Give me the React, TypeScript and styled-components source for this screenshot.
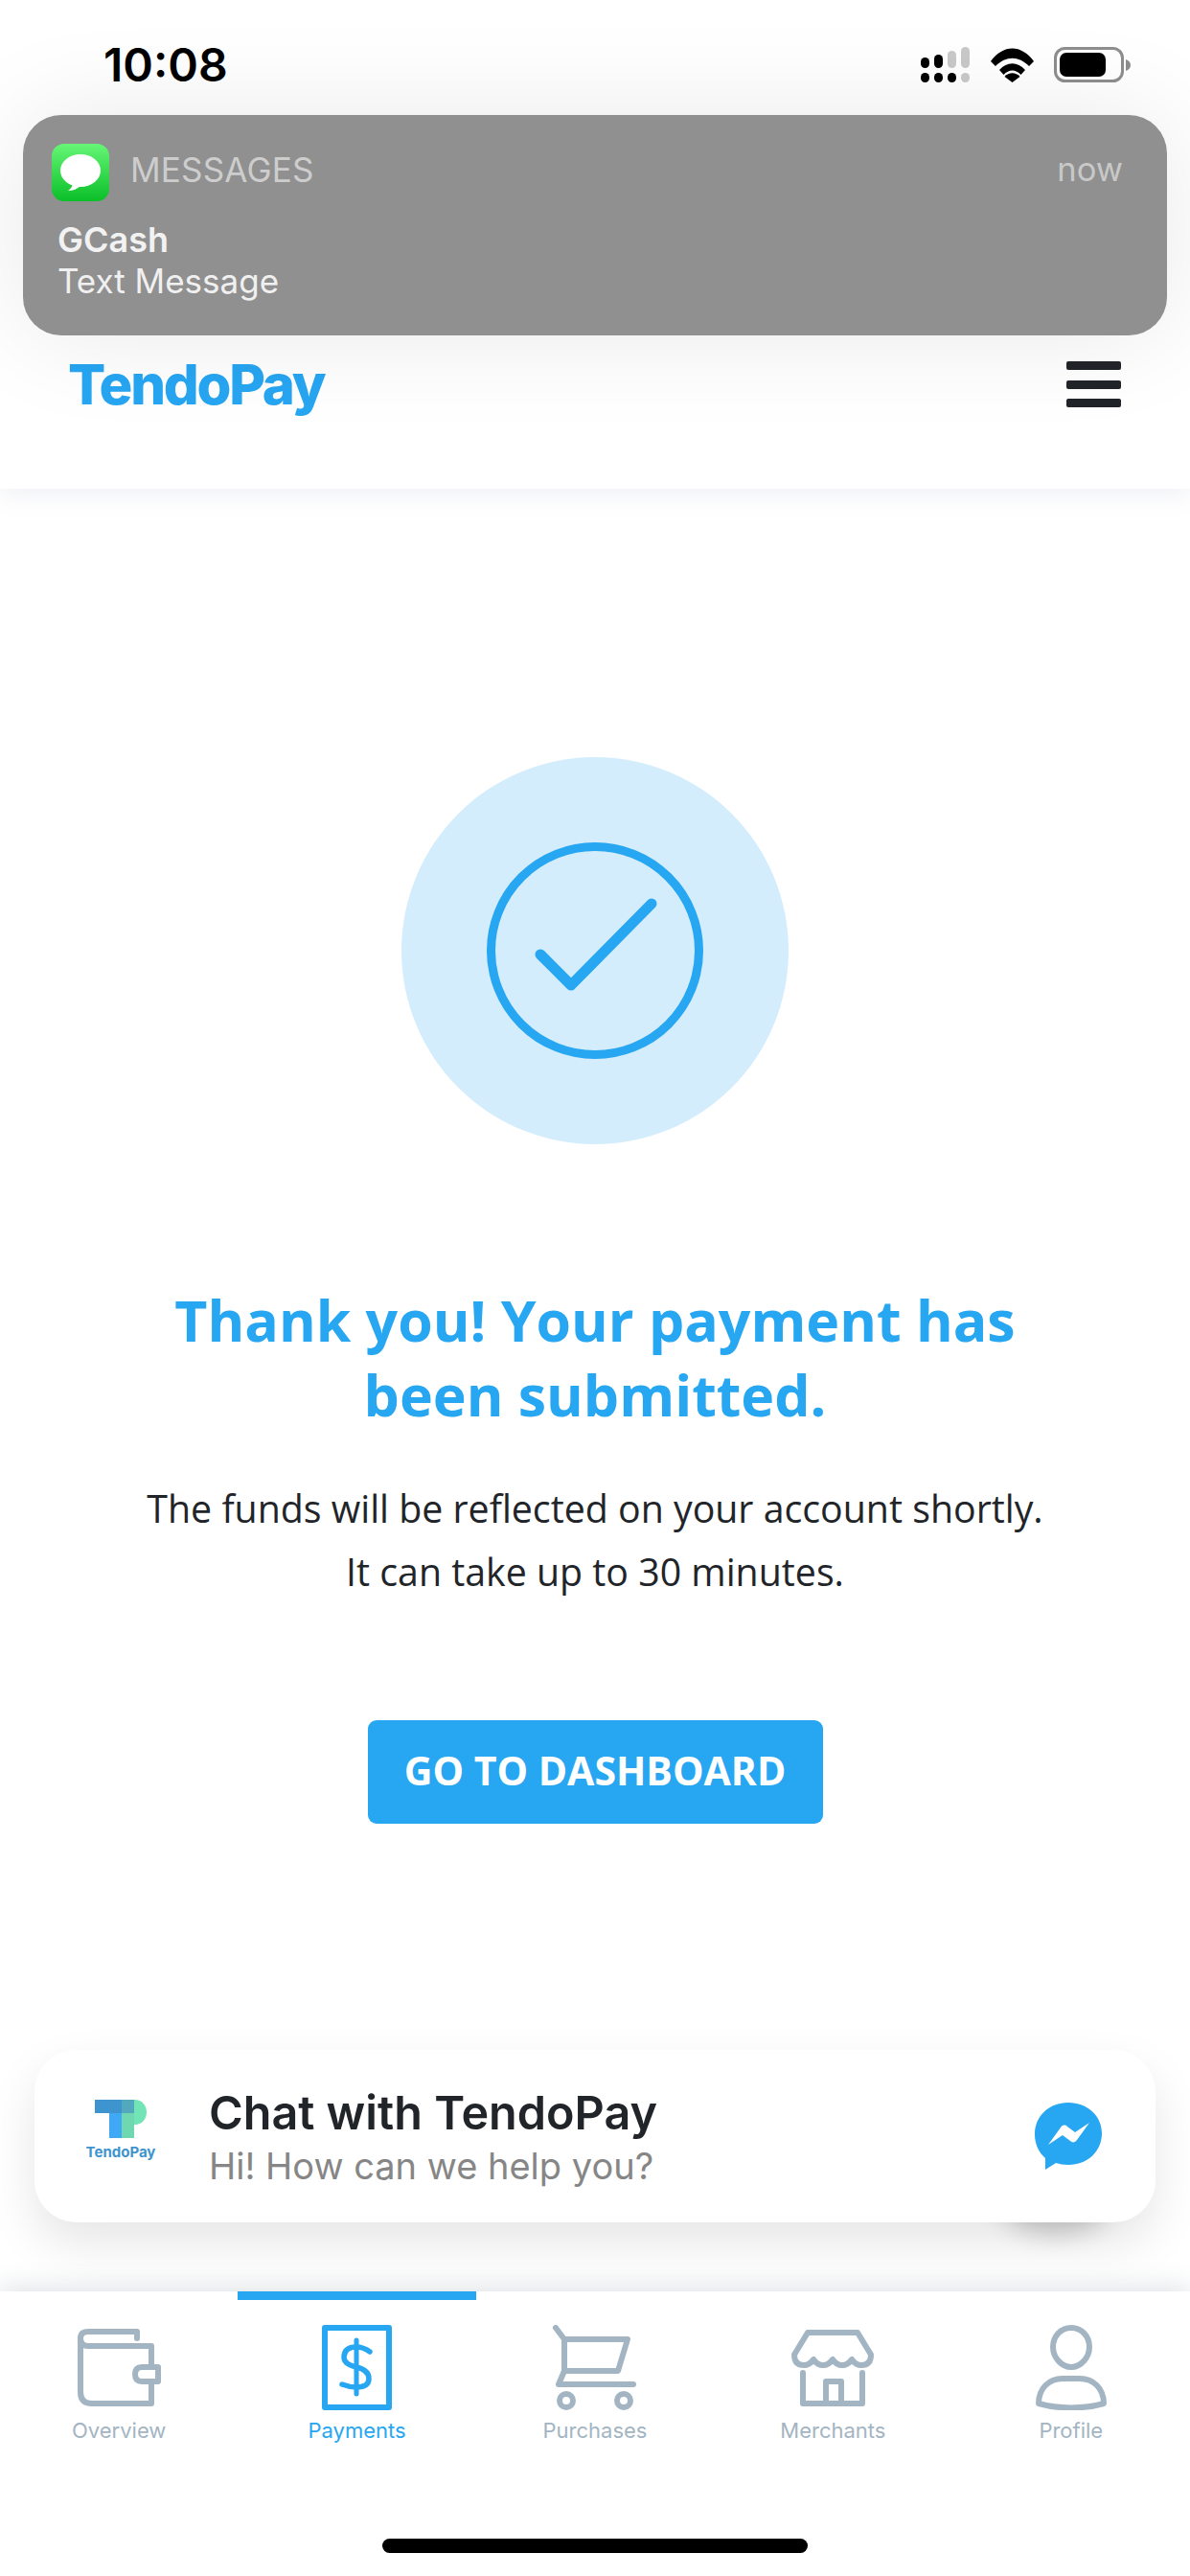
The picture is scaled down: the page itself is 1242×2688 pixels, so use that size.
import React from "react";
import styled, { createGlobalStyle } from "styled-components";

const Global = createGlobalStyle`
  html, body { margin: 0; padding: 0; background: #fff; }
  * { box-sizing: border-box; }
`;

const BLUE = "#27a6f2";
const GREY = "#a3b5c3";
const UI = `Inter, "Liberation Sans", sans-serif`;
const BRAND = `"Open Sans", Lato, sans-serif`;

const Page = styled.div`
  position: relative;
  width: 1242px;
  height: 2688px;
  display: flex;
  flex-direction: column;
  background: #fff;
  overflow: hidden;
  isolation: isolate;
  font-family: ${UI};
`;

const TopArea = styled.header`
  height: 510px;
  display: flex;
  flex-direction: column;
  background: #fff;
  box-shadow: 0 8px 22px rgba(120, 125, 170, 0.1);
`;

const StatusBar = styled.div`
  height: 120px;
  padding: 44px 62px 0 108px;
  display: flex;
  justify-content: space-between;
  align-items: flex-start;
`;

const Time = styled.span`
  font-size: 48px;
  line-height: 47px;
  font-weight: 600;
  color: #000;
`;

const StatusIcons = styled.div`
  display: flex;
  align-items: flex-start;
  margin-top: 5px;
  gap: 20px;
`;

const NavRow = styled.div`
  flex: 1;
  padding: 246px 72px 0 71px;
  display: flex;
  justify-content: space-between;
  align-items: flex-start;
`;

const Logo = styled.span`
  font-family: ${UI};
  font-size: 58px;
  line-height: 70px;
  font-weight: 800;
  letter-spacing: -2.2px;
  color: ${BLUE};
`;

const Burger = styled.div`
  width: 57px;
  margin-top: 11px;
  display: flex;
  flex-direction: column;
  gap: 10.5px;
`;

const BurgerBar = styled.span`
  height: 9px;
  border-radius: 2px;
  background: #212529;
`;

const Banner = styled.section`
  position: absolute;
  left: 24px;
  top: 120px;
  width: 1194px;
  height: 230px;
  padding: 30px 46px 0 30px;
  border-radius: 40px;
  background: #909090;
  box-shadow: 0 0 110px rgba(0, 0, 0, 0.09);
`;

const BannerHead = styled.div`
  display: flex;
  align-items: flex-start;
  gap: 22px;
`;

const AppName = styled.span`
  flex: 1;
  font-size: 35px;
  line-height: 54px;
  color: #cdcdcd;
  letter-spacing: 0.2px;
`;

const Now = styled.span`
  font-size: 34.5px;
  line-height: 54px;
  color: #c8c8c8;
`;

const BannerTitle = styled.div`
  margin: 19px 0 0 6px;
  font-size: 36px;
  line-height: 43px;
  font-weight: 600;
  color: #f2f2f2;
`;

const BannerText = styled.div`
  margin: 0 0 0 6px;
  font-size: 35px;
  line-height: 43px;
  color: #f0f0f0;
`;

const Main = styled.main`
  flex: 1;
  padding-top: 280px;
  display: flex;
  flex-direction: column;
  align-items: center;
`;

const SuccessCircle = styled.div`
  width: 404px;
  height: 404px;
  border-radius: 50%;
  background: #d4edfc;
  display: flex;
  align-items: center;
  justify-content: center;
`;

const Heading = styled.h1`
  margin: 144px 0 0;
  font-family: ${BRAND};
  font-size: 59px;
  line-height: 78px;
  font-weight: 700;
  text-align: center;
  color: ${BLUE};
`;

const Body = styled.p`
  margin: 47px 0 0;
  font-family: ${BRAND};
  font-size: 39.3px;
  line-height: 66px;
  font-weight: 400;
  text-align: center;
  color: #212529;
`;

const PrimaryButton = styled.button`
  margin-top: 122px;
  width: 475px;
  height: 108px;
  border: 0;
  padding: 0 0 4px;
  border-radius: 9px;
  background: ${BLUE};
  color: #fff;
  font-family: ${BRAND};
  font-size: 41px;
  font-weight: 700;
`;

const ChatCard = styled.div`
  position: relative;
  margin-top: 236px;
  width: 1170px;
  height: 180px;
  padding: 0 56px 0 52px;
  border-radius: 44px;
  background: #fff;
  box-shadow: 0 22px 50px rgba(0, 0, 0, 0.1);
  display: flex;
  align-items: center;

  &::before {
    content: "";
    position: absolute;
    z-index: -1;
    right: 50px;
    bottom: 4px;
    width: 110px;
    height: 60px;
    border-radius: 50%;
    box-shadow: 0 16px 26px rgba(0, 0, 0, 0.2);
  }
`;

const ChatLogo = styled.div`
  width: 76px;
  display: flex;
  flex-direction: column;
  align-items: center;
  margin: -12px 54px 0 0;
`;

const ChatLogoLabel = styled.span`
  margin-top: 6px;
  font-size: 15px;
  line-height: 18px;
  font-weight: 700;
  color: #3d94cf;
  white-space: nowrap;
`;

const ChatText = styled.div`
  flex: 1;
  display: flex;
  flex-direction: column;
  padding-top: 2px;
`;

const ChatTitle = styled.div`
  font-size: 48.5px;
  line-height: 56px;
  font-weight: 600;
  color: #212529;
`;

const ChatSub = styled.div`
  margin-top: 4px;
  font-size: 38px;
  line-height: 46px;
  color: #868686;
`;

const TabBar = styled.nav`
  height: 297px;
  background: #fff;
  box-shadow: 0 -4px 26px rgba(90, 110, 130, 0.2);
`;

const Tabs = styled.div`
  display: grid;
  grid-template-columns: repeat(5, 1fr);
`;

const Tab = styled.div<{ $active?: boolean }>`
  border-top: 9px solid ${(p) => (p.$active ? BLUE : "transparent")};
  padding-top: 26px;
  display: flex;
  flex-direction: column;
  align-items: center;
  color: ${(p) => (p.$active ? BLUE : GREY)};
`;

const TabIcon = styled.div`
  height: 89px;
  display: flex;
  align-items: center;
  justify-content: center;
`;

const TabLabel = styled.span`
  margin-top: 7px;
  font-size: 22px;
  line-height: 28px;
`;

const HomeIndicator = styled.div`
  width: 444px;
  height: 15px;
  margin: 99px auto 0;
  border-radius: 8px;
  background: #000;
`;

const Signal = () => (
  <svg width="52" height="38" viewBox="0 0 52 38">
    <g fill="#000">
      <rect x="0" y="11" width="9" height="11" rx="4.500" />
      <rect x="14" y="8" width="9" height="14" rx="4.500" />
      <rect x="0" y="27" width="9" height="10" rx="4.500" />
      <rect x="14" y="27" width="9" height="10" rx="4.500" />
      <rect x="28" y="27" width="9" height="10" rx="4.500" />
    </g>
    <g fill="#c9c9c9">
      <rect x="28" y="4" width="9" height="18" rx="4.500" />
      <rect x="42" y="0" width="9" height="22" rx="4.500" />
      <rect x="42" y="27" width="9" height="10" rx="4.500" />
    </g>
  </svg>
);

const Wifi = () => (
  <svg width="47" height="37" viewBox="0 0 47 37">
    <path d="M1 15C14 -3 33 -3 46 15L41 20C30 9 17 9 6 20Z" fill="#000" />
    <path d="M10 24C18 15 29 15 37 24L32.500 29C27 23 20 23 14.500 29Z" fill="#000" />
    <path d="M15.500 31C20 26 27 26 31.500 31L23.500 37Z" fill="#000" />
  </svg>
);

const Battery = () => (
  <svg width="80" height="38" viewBox="0 0 80 38">
    <rect x="1.500" y="1.500" width="70" height="34" rx="10" fill="none" stroke="#8e8e8e" strokeWidth="3" />
    <rect x="6" y="6" width="48" height="25" rx="7" fill="#000" />
    <path d="M75 13C78 14 80 16 80 19C80 22 78 24 75 25Z" fill="#8e8e8e" />
  </svg>
);

const MessagesIcon = () => (
  <svg width="60" height="60" viewBox="0 0 60 60">
    <defs>
      <linearGradient id="msg" x1="0" y1="0" x2="0" y2="1">
        <stop offset="0" stopColor="#66f676" />
        <stop offset="1" stopColor="#0abf28" />
      </linearGradient>
    </defs>
    <rect width="60" height="60" rx="13" fill="url(#msg)" />
    <ellipse cx="30" cy="28" rx="21" ry="17" fill="#fff" />
    <path d="M22 41C22 44 20 47 17 49C22 49 27 47 30 44Z" fill="#fff" />
  </svg>
);

const CheckIcon = () => (
  <svg width="226" height="226" viewBox="0 0 226 226">
    <circle cx="113" cy="113" r="108.500" fill="none" stroke={BLUE} strokeWidth="9" />
    <path d="M56 117 88 149 172 64" fill="none" stroke={BLUE} strokeWidth="11" strokeLinejoin="round" strokeLinecap="round" />
  </svg>
);

const TpLogo = () => (
  <svg width="54" height="40" viewBox="0 0 54 40">
    <path d="M41 0H42C49 0 54 6 54 13C54 20 49 26 42 26H41Z" fill="#72e4b5" />
    <rect x="15" y="14" width="13" height="26" fill="#3fa9f5" />
    <rect x="28" y="14" width="13" height="26" fill="#6fd8b0" />
    <rect x="0" y="0" width="28" height="14" fill="#3d94cf" />
    <rect x="28" y="0" width="13" height="14" fill="#52a9bd" />
  </svg>
);

const MessengerIcon = () => (
  <svg width="70" height="70" viewBox="0 0 70 70">
    <path d="M35 0C15 0 0 14 0 33C0 43 4 52 11 58V70L22 63C26 64 30 65 35 65C55 65 70 51 70 32C70 14 55 0 35 0Z" fill={BLUE} />
    <path d="M14 44 27 26C29 23 32 23 34 25L42 31 57 21 44 39C42 42 39 42 37 40L29 34Z" fill="#fff" />
  </svg>
);

const strokeProps = {
  fill: "none",
  stroke: "currentColor",
  strokeLinecap: "round" as const,
  strokeLinejoin: "round" as const,
};

const WalletIcon = () => (
  <svg width="89" height="81" viewBox="0 0 89 81" {...strokeProps} strokeWidth="6">
    <path d="M63 10V3H12Q4 3 4 10Q4 18 12 18H78V78H16Q4 78 4 66V10" />
    <path d="M85 40H68Q61 40 61 47.500Q61 55 68 55H85Z" fill="#fff" />
  </svg>
);

const DollarIcon = () => (
  <svg width="73" height="89" viewBox="0 0 73 89" {...strokeProps} strokeWidth="5.500">
    <rect x="3" y="3" width="67" height="83" strokeWidth="6" />
    <path d="M36 16V72" strokeWidth="5" />
    <path d="M50 28Q43 23 36 23Q23 23 23 34Q23 41 36 44Q49 47 49 56Q49 65 36 65Q29 65 21 62" />
  </svg>
);

const CartIcon = () => (
  <svg width="87" height="89" viewBox="0 0 87 89" {...strokeProps} strokeWidth="6">
    <path d="M3 3 12 15H78L68 48H12V15" />
    <path d="M12 48 6 62H84" />
    <circle cx="14" cy="79" r="7" />
    <circle cx="74" cy="79" r="7" />
  </svg>
);

const StoreIcon = () => (
  <svg width="88" height="81" viewBox="0 0 88 81" {...strokeProps} strokeWidth="6">
    <path d="M18 4H70L84 27Q84 38 74 38Q68 38 64 32Q60 38 54 38Q48 38 44 32Q40 38 34 38Q28 38 24 32Q20 38 14 38Q4 38 4 27Z" />
    <path d="M13 46V78H75V46" />
    <path d="M37 78V55H53V78" />
  </svg>
);

const ProfileIcon = () => (
  <svg width="74" height="89" viewBox="0 0 74 89" {...strokeProps} strokeWidth="6">
    <path d="M37 3C48 3 56 12 56 23C56 34 47 44 37 44C27 44 18 34 18 23C18 12 26 3 37 3Z" />
    <path d="M3 82C3 66 14 56 28 56H46C60 56 71 66 71 82C50 88 24 88 3 82Z" />
  </svg>
);

const tabs = [
  { label: "Overview", Icon: WalletIcon },
  { label: "Payments", Icon: DollarIcon, active: true },
  { label: "Purchases", Icon: CartIcon },
  { label: "Merchants", Icon: StoreIcon },
  { label: "Profile", Icon: ProfileIcon },
];

export default function App() {
  return (
    <Page>
      <Global />
      <TopArea>
        <StatusBar>
          <Time>10:08</Time>
          <StatusIcons>
            <Signal />
            <Wifi />
            <Battery />
          </StatusIcons>
        </StatusBar>
        <NavRow>
          <Logo>TendoPay</Logo>
          <Burger>
            <BurgerBar />
            <BurgerBar />
            <BurgerBar />
          </Burger>
        </NavRow>
      </TopArea>

      <Banner>
        <BannerHead>
          <MessagesIcon />
          <AppName>MESSAGES</AppName>
          <Now>now</Now>
        </BannerHead>
        <BannerTitle>GCash</BannerTitle>
        <BannerText>Text Message</BannerText>
      </Banner>

      <Main>
        <SuccessCircle>
          <CheckIcon />
        </SuccessCircle>
        <Heading>
          Thank you! Your payment has
          <br />
          been submitted.
        </Heading>
        <Body>
          The funds will be reflected on your account shortly.
          <br />
          It can take up to 30 minutes.
        </Body>
        <PrimaryButton>GO TO DASHBOARD</PrimaryButton>
        <ChatCard>
          <ChatLogo>
            <TpLogo />
            <ChatLogoLabel>TendoPay</ChatLogoLabel>
          </ChatLogo>
          <ChatText>
            <ChatTitle>Chat with TendoPay</ChatTitle>
            <ChatSub>Hi! How can we help you?</ChatSub>
          </ChatText>
          <MessengerIcon />
        </ChatCard>
      </Main>

      <TabBar>
        <Tabs>
          {tabs.map(({ label, Icon, active }) => (
            <Tab key={label} $active={active}>
              <TabIcon>
                <Icon />
              </TabIcon>
              <TabLabel>{label}</TabLabel>
            </Tab>
          ))}
        </Tabs>
        <HomeIndicator />
      </TabBar>
    </Page>
  );
}
